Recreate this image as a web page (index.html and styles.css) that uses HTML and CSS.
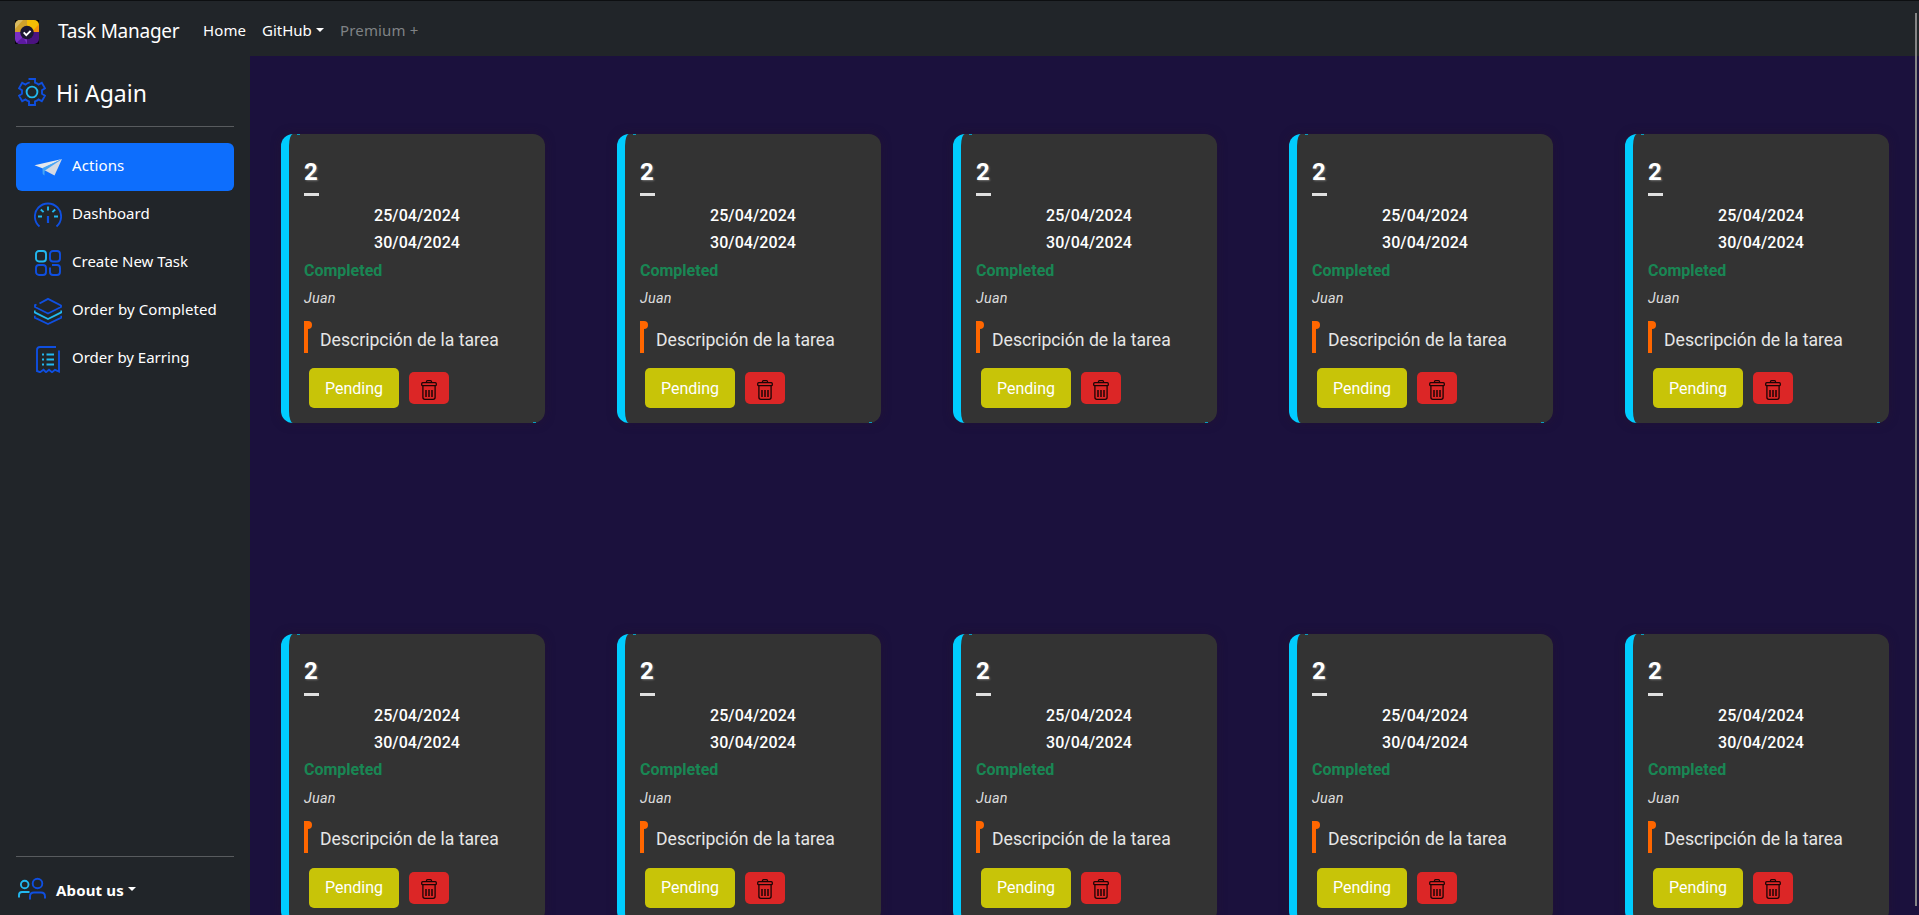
FILE: index.html
```html
<!DOCTYPE html>
<html lang="es">
<head>
<meta charset="utf-8">
<title>Task Manager</title>
<link rel="stylesheet" href="styles.css">
</head>
<body>
<svg class="defs" aria-hidden="true">
  <symbol id="trash" viewBox="0 0 16 20">
    <g fill="none" stroke="#1c0505" stroke-width="1.3">
      <path d="M5.5 2.6V1.6Q5.5 .7 6.5 .7H9.500Q10.500 .7 10.500 1.600V2.600"/>
      <rect x=".7" y="2.700" width="14.600" height="3" rx="1"/>
      <path d="M1.900 6V17.300Q1.900 19.300 3.900 19.300H12.100Q14.100 19.300 14.100 17.300V6"/>
      <path d="M5 10v7M8 10v7M11 10v7" stroke-width="1.500"/>
    </g>
  </symbol>
</svg>
<header class="navbar">
  <svg class="logo" viewBox="0 0 24 24">
    <path fill="#08070b" d="M0 0h24v24H0z"/>
    <clipPath id="logo-clip"><rect width="24" height="24" rx="5"/></clipPath>
    <g clip-path="url(#logo-clip)">
      <path fill="#cfa02c" d="M0 0h12v12H0z"/>
      <path fill="#d9bb62" d="M0 0h8L0 9z"/>
      <path fill="#f5bd04" d="M12 0h12v12H12z"/>
      <path fill="#f6930b" d="M24 4v9h-8z"/>
      <path fill="#7a2fc4" d="M0 12h12v12H0z"/>
      <path fill="#4b1380" d="M12 12h12v12H12z"/>
      <path fill="#5c1aa0" d="M0 24l8-7 4 7z"/>
    </g>
    <circle cx="12" cy="12.500" r="6.800" fill="#1b1730"/>
    <path d="M8.700 12.300l2.600 2.800 4.300-4.300" fill="none" stroke="#fff" stroke-width="1.900"/>
  </svg>
  <a class="brand">Task Manager</a>
  <nav class="links">
    <a class="home">Home</a>
    <a class="github">GitHub<i class="caret"></i></a>
    <a class="premium">Premium +</a>
  </nav>
</header>
<div class="layout">
  <aside class="sidebar">
    <div class="greeting">
      <svg class="icon" viewBox="0 0 28 28" fill="none" stroke-width="1.900">
        <path stroke="#0f4fe0" d="M10.500 1H17V4.600Q19 5.200 20.500 6.500L23.800 4.800L27 10.300L24 12.200V15.800L27 17.700L23.800 23.200L20.500 21.500Q19 22.800 17 23.400V27H11V23.400Q9 22.800 7.500 21.500L4.200 23.200L1 17.700L4 15.800V12.200L1 10.300L4.200 4.800L7.500 6.500Q9.200 5 11.700 4.400"/>
        <circle cx="14" cy="14" r="5.400" stroke="#22b8f0"/>
      </svg>
      <span>Hi Again</span>
    </div>
    <hr>
    <nav class="menu">
      <a class="item active">
        <svg class="icon" viewBox="0 0 28 28">
          <path fill="#e4e8ee" d="M.5 12.300L28 6 9 15.500z"/>
          <path fill="#45a5f5" d="M8.500 15L28 6 10.500 18.500V22.500L8.700 21z"/>
          <path fill="#d5dae3" d="M11 17.500L28 6 20.500 22.500z"/>
        </svg>
        <span class="w-actions">Actions</span>
      </a>
      <a class="item">
        <svg class="icon" viewBox="0 0 28 28" fill="none" stroke-width="1.900">
          <path stroke="#0f4fe0" d="M5.500 25.500A13.100 13.100 0 1 1 22.500 25.500"/>
          <path stroke="#22b8f0" d="M4 15.500h4M20 15.500h4M6.800 8.500l2.800 2.600M21.200 8.500l-2.800 2.600M14 5.500v4"/>
          <path stroke="#0f4fe0" stroke-width="2.200" d="M14 15v7"/>
        </svg>
        <span>Dashboard</span>
      </a>
      <a class="item">
        <svg class="icon" viewBox="0 0 28 28" fill="none" stroke="#0f4fe0" stroke-width="1.900">
          <rect x="2" y="2" width="10" height="10.500" rx="3" stroke="#22b8f0"/>
          <rect x="16" y="2" width="10" height="10.500" rx="3"/>
          <rect x="2" y="16" width="10" height="10" rx="3"/>
          <path d="M18 16H23Q26 16 26 19V23Q26 26 23 26H19Q16 26 16 23V18.500"/>
        </svg>
        <span>Create New Task</span>
      </a>
      <a class="item">
        <svg class="icon" viewBox="0 0 28 28" fill="none" stroke="#0f4fe0" stroke-width="1.900" stroke-linejoin="round">
          <path d="M5.500 6.500L14 1.800 27 8.500V10L14 16.500 1 10V8.200L2.500 7.500"/>
          <path stroke="#22b8f0" d="M.7 13.500V15.300L14 22 27.300 15.300V13.500"/>
          <path d="M.7 18.800V20.600L14 27 27.300 20.600V18.800"/>
        </svg>
        <span class="w-completed">Order by Completed</span>
      </a>
      <a class="item">
        <svg class="icon" viewBox="0 0 28 28" fill="none" stroke-width="1.900">
          <path stroke="#0f4fe0" d="M22 2H6Q3 2 3 5V26L6 27.200 9.500 24.800 12 27.200 15 24.800 18 27.200 21 24.800 25 26.500V5.500"/>
          <path stroke="#22b8f0" d="M8 9.500h2M12.500 9.500h7.500M8 14.500h2M12.500 14.500h7.500M8 19.500h2M12.500 19.500h7.500"/>
        </svg>
        <span>Order by Earring</span>
      </a>
    </nav>
    <hr>
    <div class="about">
      <svg class="icon" viewBox="0 0 28 28" fill="none" stroke-width="1.900">
        <g stroke="#22b8f0"><circle cx="6.700" cy="9.500" r="3.800"/><path d="M1 22.500V20Q1 17 4 17H11.500"/></g>
        <g stroke="#0f4fe0"><circle cx="19.500" cy="8.500" r="4.800"/><path d="M12 24.500V21.500Q12 17.500 16 17.500H23Q27 17.500 27 21.500V23.500"/></g>
      </svg>
      <span>About us</span><i class="caret"></i>
    </div>
  </aside>
  <main class="board">
    <article class="card"><h2>2</h2><time>25/04/2024</time><time>30/04/2024</time><b class="status">Completed</b><em>Juan</em><p>Descripción de la tarea</p><div class="buttons"><button class="pending">Pending</button><button class="delete"><svg><use href="#trash"/></svg></button></div></article>
    <article class="card"><h2>2</h2><time>25/04/2024</time><time>30/04/2024</time><b class="status">Completed</b><em>Juan</em><p>Descripción de la tarea</p><div class="buttons"><button class="pending">Pending</button><button class="delete"><svg><use href="#trash"/></svg></button></div></article>
    <article class="card"><h2>2</h2><time>25/04/2024</time><time>30/04/2024</time><b class="status">Completed</b><em>Juan</em><p>Descripción de la tarea</p><div class="buttons"><button class="pending">Pending</button><button class="delete"><svg><use href="#trash"/></svg></button></div></article>
    <article class="card"><h2>2</h2><time>25/04/2024</time><time>30/04/2024</time><b class="status">Completed</b><em>Juan</em><p>Descripción de la tarea</p><div class="buttons"><button class="pending">Pending</button><button class="delete"><svg><use href="#trash"/></svg></button></div></article>
    <article class="card"><h2>2</h2><time>25/04/2024</time><time>30/04/2024</time><b class="status">Completed</b><em>Juan</em><p>Descripción de la tarea</p><div class="buttons"><button class="pending">Pending</button><button class="delete"><svg><use href="#trash"/></svg></button></div></article>
    <article class="card lower"><h2>2</h2><time>25/04/2024</time><time>30/04/2024</time><b class="status">Completed</b><em>Juan</em><p>Descripción de la tarea</p><div class="buttons"><button class="pending">Pending</button><button class="delete"><svg><use href="#trash"/></svg></button></div></article>
    <article class="card lower"><h2>2</h2><time>25/04/2024</time><time>30/04/2024</time><b class="status">Completed</b><em>Juan</em><p>Descripción de la tarea</p><div class="buttons"><button class="pending">Pending</button><button class="delete"><svg><use href="#trash"/></svg></button></div></article>
    <article class="card lower"><h2>2</h2><time>25/04/2024</time><time>30/04/2024</time><b class="status">Completed</b><em>Juan</em><p>Descripción de la tarea</p><div class="buttons"><button class="pending">Pending</button><button class="delete"><svg><use href="#trash"/></svg></button></div></article>
    <article class="card lower"><h2>2</h2><time>25/04/2024</time><time>30/04/2024</time><b class="status">Completed</b><em>Juan</em><p>Descripción de la tarea</p><div class="buttons"><button class="pending">Pending</button><button class="delete"><svg><use href="#trash"/></svg></button></div></article>
    <article class="card lower"><h2>2</h2><time>25/04/2024</time><time>30/04/2024</time><b class="status">Completed</b><em>Juan</em><p>Descripción de la tarea</p><div class="buttons"><button class="pending">Pending</button><button class="delete"><svg><use href="#trash"/></svg></button></div></article>
  </main>
</div>
<div class="scroll-thumb"></div>
</body>
</html>
```
FILE: styles.css
```css
* { box-sizing: border-box; }
body {
  margin: 0;
  height: 100vh;
  overflow: hidden;
  display: flex;
  flex-direction: column;
  background: #212529;
  color: #fff;
  font: 16px/24px "Noto Sans", sans-serif;
}
.defs { position: absolute; width: 0; height: 0; }
.navbar {
  flex: none;
  height: 56px;
  display: flex;
  align-items: center;
  padding: 5px 0 0 15px;
  border-top: 1px solid #0d0f11;
}
.logo { width: 24px; height: 24px; margin: 2px 19px 0 0; }
.brand { width: 145px; font-size: 19px; letter-spacing: -.25px; white-space: nowrap; }
.links { display: flex; padding-bottom: 2px; font-size: 15px; white-space: nowrap; }
.home { width: 59px; letter-spacing: .1px; }
.github { width: 78px; }
.premium { color: #7f8285; letter-spacing: .15px; }
.caret {
  display: inline-block;
  margin-left: 4px;
  vertical-align: 4px;
  border: 4px solid transparent;
  border-top-color: currentColor;
  border-bottom: 0;
}
.layout { flex: 1; min-height: 0; display: flex; }
.sidebar {
  width: 250px;
  padding: 16px 16px 11px;
  display: flex;
  flex-direction: column;
}
.icon { width: 28px; height: 28px; flex: none; }
.greeting {
  display: flex;
  height: 40px;
  align-items: center;
  gap: 10px;
  padding-left: 2px;
  font-size: 23px;
}
.greeting span { padding-top: 2px; }
.sidebar hr {
  width: 100%;
  height: 1px;
  flex: none;
  margin: 14px 0 16px;
  border: 0;
  background: #585b5e;
}
.menu { flex: 1; }
.item {
  height: 48px;
  display: flex;
  gap: 10px;
  padding: 10px 0 0 18px;
  border-radius: 6px;
  font-size: 15px;
  line-height: 24px;
  white-space: nowrap;
}
.w-actions { letter-spacing: .1px; }
.w-completed { letter-spacing: .1px; }
.active { background: #0d6efd; }
.about {
  height: 31px;
  display: flex;
  align-items: center;
  padding-left: 2px;
  font-size: 15px;
  font-weight: 700;
}
.about span { margin-left: 10px; padding-top: 2px; letter-spacing: .15px; }
.board {
  flex: 1;
  display: grid;
  grid-template-columns: repeat(5, 264px);
  grid-auto-rows: 289px;
  column-gap: 72px;
  row-gap: 211px;
  padding: 78px 0 0 31px;
  background: #1b113d;
  font-family: Roboto, sans-serif;
}
.card {
  position: relative;
  display: flex;
  flex-direction: column;
  padding: 24px 15px 0;
  border-left: 8px solid #00ccff;
  border-radius: 12px;
  background: #333;
  box-shadow: 0 0 10px rgba(40, 20, 45, .5);
}
.card::before,
.card::after {
  content: "";
  position: absolute;
  width: 3px;
  height: 1px;
  background: #0a9dc0;
}
.card::before { left: 8px; top: 0; }
.card::after { right: 9px; bottom: 0; }
.card h2 {
  width: 15px;
  height: 38px;
  margin: 0 0 10px;
  border-bottom: 3px solid #e0e0e0;
  font-size: 24px;
  line-height: 28px;
  text-shadow: 1px 1px 2px rgba(255, 255, 255, .3);
}
.card time {
  height: 27px;
  line-height: 19px;
  font-weight: 500;
  letter-spacing: .08px;
  text-align: center;
}
.status { height: 28px; line-height: 21px; color: #198754; }
.card em { height: 24px; line-height: 22px; font-size: 14.4px; letter-spacing: .25px; color: #ddd; }
.card p {
  position: relative;
  height: 32px;
  margin: 9px 0 15px;
  padding-left: 12px;
  border-left: 4px solid #ff6600;
  font-size: 17.6px;
  line-height: 39px;
  color: #e6e6e6;
  white-space: nowrap;
}
.lower h2 { line-height: 26px; }
.lower .status { line-height: 19px; }
.lower p { line-height: 37px; }
.card p::before {
  content: "";
  position: absolute;
  left: -4px;
  top: 0;
  width: 8px;
  height: 8px;
  border-radius: 50%;
  background: #ff6600;
}
.buttons { display: flex; align-items: center; gap: 10px; padding-left: 5px; }
.buttons button { border: 0; padding: 0; border-radius: 5px; color: #fff; font: 16px Roboto, sans-serif; }
.buttons .pending { width: 90px; height: 40px; background: #c8c408; }
.lower .buttons .pending { padding-bottom: 2px; }
.buttons .delete {
  display: flex;
  justify-content: center;
  width: 40px;
  height: 32px;
  padding-top: 8px;
  background: #dc2626;
}
.lower .buttons .delete { padding-top: 7px; }
.delete svg { width: 16px; height: 20px; }
.scroll-thumb {
  position: absolute;
  left: 1915px;
  top: 13px;
  width: 2px;
  height: 893px;
  background: #858585;
}
```
